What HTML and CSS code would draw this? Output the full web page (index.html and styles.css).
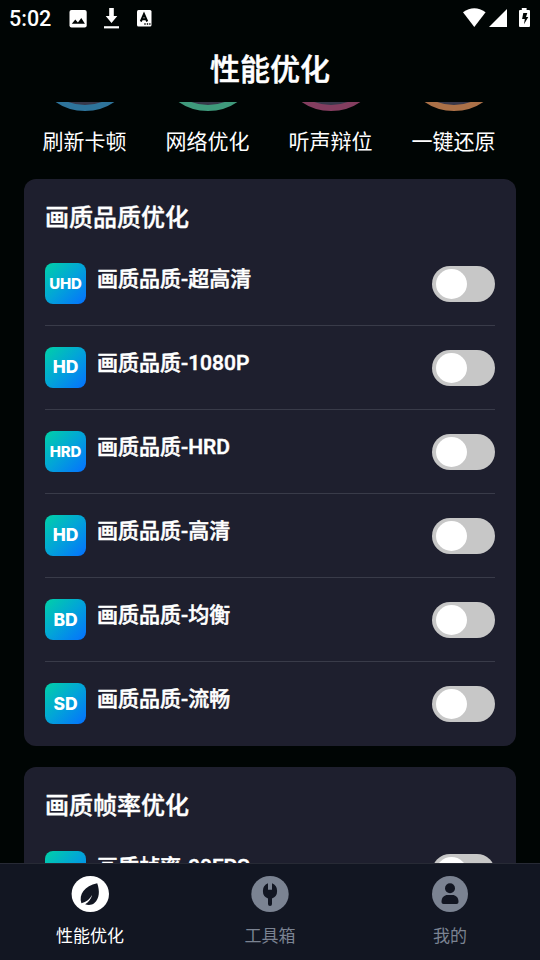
FILE: index.html
```html
<!DOCTYPE html>
<html lang="zh-CN">
<head>
<meta charset="utf-8">
<title>性能优化</title>
<link rel="stylesheet" href="styles.css">
</head>
<body>
<div class="app">
  <div class="status">
    <span class="time">5:02</span>
    <svg class="s-img" width="18" height="18" viewBox="0 0 18 18"><rect x=".5" width="17.2" height="17.5" rx="2" fill="#fff"/><path d="M2.800 13.800l3.500-4.400 2.600 3 3.400-4.400 3.600 5.800z" fill="#000504"/></svg>
    <svg class="s-down" width="15" height="21" viewBox="0 0 15 21"><path d="M5.2 0h4.6v8h3.5L7.5 15 1.7 8h3.500z" fill="#fff"/><path d="M0 18.200h15v2.200H0z" fill="#fff"/></svg>
    <svg class="s-a" width="15" height="17" viewBox="0 0 15 17"><rect width="14.5" height="16.5" rx="1.5" fill="#fff"/><path d="M3.800 11.500L7 4.200l3.200 7.300M5 9.300h4" fill="none" stroke="#000504" stroke-width="2.100"/><path d="M7.300 14h1.400M9.800 14h1.400M12.200 14h1.300" stroke="#000504" stroke-width="1.400"/></svg>
    <svg class="s-right" width="70" height="22" viewBox="0 0 70 22"><path d="M0 4.200Q11.300-3.600 22.600 4.200L11.300 19z" fill="#fff"/><path d="M26 19h18V1z" fill="#fff"/><path d="M58.800 0h4.800v2H66q1 0 1 1v15q0 1-1 1h-9q-1 0-1-1V3q0-1 1-1h1.800z" fill="#fff"/><path d="M60.300 5h4l-1.300 4h2.300l-4.300 7.300.8-5.300h-2.700z" fill="#000504"/></svg>
  </div>
  <header class="header">性能优化</header>
  <main class="scroll">
    <div class="quick">
      <div class="q"><i class="ring blue"></i><span>刷新卡顿</span></div>
      <div class="q"><i class="ring green"></i><span>网络优化</span></div>
      <div class="q"><i class="ring pink"></i><span>听声辩位</span></div>
      <div class="q"><i class="ring orange"></i><span>一键还原</span></div>
    </div>
    <section class="card">
      <h2>画质品质优化</h2>
      <div class="row"><b class="badge small">UHD</b><span class="name">画质品质-超高清</span><i class="toggle"></i></div>
      <div class="row"><b class="badge">HD</b><span class="name">画质品质-1080P</span><i class="toggle"></i></div>
      <div class="row"><b class="badge small">HRD</b><span class="name">画质品质-HRD</span><i class="toggle"></i></div>
      <div class="row"><b class="badge">HD</b><span class="name">画质品质-高清</span><i class="toggle"></i></div>
      <div class="row"><b class="badge low">BD</b><span class="name">画质品质-均衡</span><i class="toggle"></i></div>
      <div class="row"><b class="badge low">SD</b><span class="name">画质品质-流畅</span><i class="toggle"></i></div>
    </section>
    <section class="card">
      <h2>画质帧率优化</h2>
      <div class="row"><b class="badge"></b><span class="name">画质帧率-90FPS</span><i class="toggle"></i></div>
    </section>
  </main>
  <nav class="nav">
    <div class="tab active">
      <svg width="38" height="36" viewBox="0 0 38 36"><ellipse cx="19.300" cy="18" rx="18.700" ry="18" fill="#fff"/><path d="M26.200 7.300C28.900 15 28.600 22.500 23.400 27c-2.600 2.200-6 2.400-9.300 1.300 3.600-2.300 6-5.300 7.100-9.600-2.300 4.300-5.800 7.200-10.800 8.500C7.600 18.500 13.400 10 26.200 7.300z" fill="#121622"/></svg>
      <span>性能优化</span>
    </div>
    <div class="tab">
      <svg width="38" height="36" viewBox="0 0 38 36"><ellipse cx="19" cy="18" rx="18.700" ry="18" fill="#7b8392"/><path d="M17 7.300v6.500h4V7.300a8.200 8.200 0 0 1 0 15.200v5.400q0 2-2 2t-2-2v-5.400a8.200 8.200 0 0 1 0-15.200z" fill="#121622"/></svg>
      <span>工具箱</span>
    </div>
    <div class="tab">
      <svg width="38" height="36" viewBox="0 0 38 36"><circle cx="19" cy="18" r="18" fill="#7b8392"/><circle cx="19" cy="12.300" r="5" fill="#121622"/><path d="M10.500 26c0-5 3-7 6-7h5c3 0 6 2 6 7q0 2-2 2h-13q-2 0-2-2z" fill="#121622"/></svg>
      <span>我的</span>
    </div>
  </nav>
</div>
</body>
</html>
```
FILE: styles.css
```css
* { box-sizing: border-box; }
body {
  margin: 0;
  background: #000504;
  color: #fff;
  font-family: Roboto, "Noto Sans CJK SC", sans-serif;
}
.app { width: 540px; height: 960px; display: flex; flex-direction: column; overflow: hidden; }
.status { height: 37px; flex: none; display: flex; align-items: flex-start; padding: 0 7px 0 9px; }
.time { width: 60px; font-size: 21.500px; font-weight: 500; line-height: 24px; margin-top: 7px; }
.s-img { margin-top: 10px; }
.s-down { margin: 8px 0 0 17px; }
.s-a { margin: 10px 0 0 18px; }
.s-right { margin: 8px 0 0 auto; }
.header { height: 65px; flex: none; text-align: center; font-size: 30px; font-weight: 500; line-height: 66px; -webkit-text-stroke: 0.5px #fff; }
.scroll { flex: 1; min-height: 0; overflow: hidden; padding: 0 24px; display: flex; flex-direction: column; gap: 21px; }
.quick { flex: none; height: 56px; margin-left: -1px; display: flex; align-items: flex-end; }
.q { width: 123px; display: flex; flex-direction: column; align-items: center; gap: 15px; font-size: 21px; line-height: 32px; }
.ring { width: 104px; height: 104px; flex: none; border: 6px solid; border-radius: 50%; background: #38384a; }
.blue { border-color: #2e749b; }
.green { border-color: #3f9a7c; }
.pink { border-color: #843e60; }
.orange { border-color: #ab7148; }
.card { flex: none; background: #1e1f2e; border-radius: 12px; padding: 0 21px; }
h2 { margin: 0; height: 63px; padding-top: 2px; font-size: 24px; font-weight: 500; line-height: 74px; -webkit-text-stroke: 0.4px #fff; }
.row { height: 84px; display: flex; align-items: flex-start; padding-top: 21px; border-bottom: 1px solid #393b49; }
.row:last-child { border-bottom: 0; }
.badge {
  width: 41px; height: 41px; border-radius: 8px;
  background: linear-gradient(135deg, #00d1a7, #02a4d8 50%, #0570ff);
  font: 800 17.5px/40px Inter, sans-serif; letter-spacing: -0.1px; text-align: center;
}
.small { font-size: 15px; line-height: 42px; letter-spacing: -0.2px; }
.low { line-height: 42px; }
.name { margin-left: 11px; flex: 1; font-size: 21px; font-weight: 500; line-height: 32px; -webkit-text-stroke: 0.5px #fff; }
.toggle { width: 63px; height: 36px; margin-top: 3px; padding: 3px 4px; border-radius: 18px; background: #c7c7c7; }
.toggle::before { content: ""; display: block; width: 31px; height: 30px; border-radius: 50%; background: #fff; }
.nav { height: 97px; flex: none; display: flex; background: #121622; border-top: 1px solid #272a35; }
.tab { flex: 1; display: flex; flex-direction: column; align-items: center; padding-top: 12px; color: #7b8392; font-size: 17px; line-height: 24px; }
.tab span { margin-top: 12px; }
.active { color: #fff; }
```
